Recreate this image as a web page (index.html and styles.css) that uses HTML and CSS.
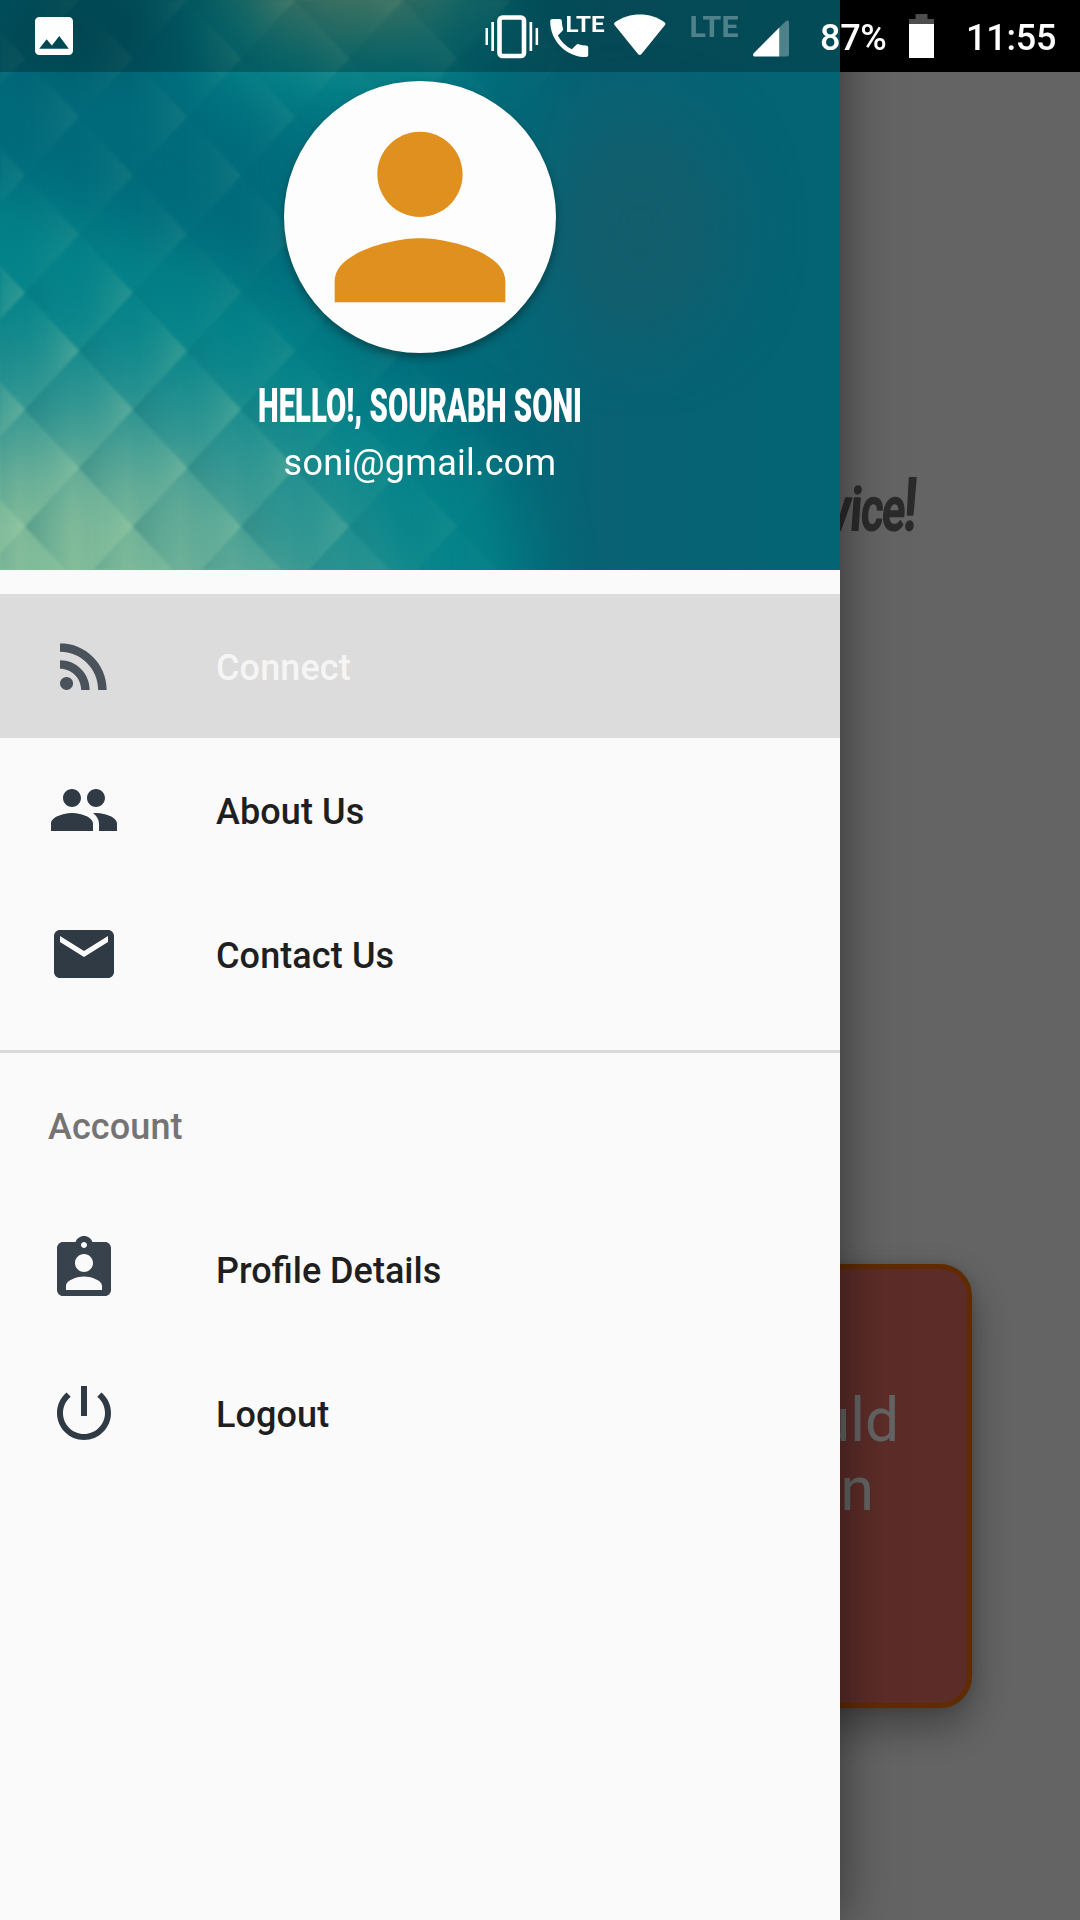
FILE: index.html
```html
<!DOCTYPE html>
<html lang="en">
<head>
<meta charset="utf-8">
<title>Navigation drawer</title>
<link rel="stylesheet" href="styles.css">
</head>
<body>
<div class="screen">
  <main class="page">
    <svg class="slogan" width="90" height="80" viewBox="830 470 90 80">
      <g transform="translate(0 530) skewX(-4)" class="slogan-text">
        <text x="826" y="0" textLength="24" lengthAdjust="spacingAndGlyphs">v</text>
        <text x="849" y="0" textLength="12" lengthAdjust="spacingAndGlyphs">i</text>
        <text x="860" y="0" textLength="22" lengthAdjust="spacingAndGlyphs">c</text>
        <text x="881" y="0" textLength="23" lengthAdjust="spacingAndGlyphs">e</text>
        <text x="902" y="0" class="bang" textLength="14" lengthAdjust="spacingAndGlyphs">!</text>
      </g>
    </svg>
    <section class="card">
      <p class="card-line">uld</p>
      <p class="card-line card-line-short">n</p>
    </section>
  </main>
  <div class="scrim"></div>

  <aside class="drawer">
    <header class="header">
      <svg class="cover" width="840" height="570" viewBox="0 0 840 570">
        <defs>
          <linearGradient id="base" x1="0" y1="0" x2="1" y2="0">
            <stop offset="0" stop-color="#006a7b"/>
            <stop offset=".5" stop-color="#006d7c"/>
            <stop offset=".72" stop-color="#086273"/>
            <stop offset="1" stop-color="#036474"/>
          </linearGradient>
          <linearGradient id="scale" x1="0" y1="0" x2="1" y2="0">
            <stop offset="0" stop-color="#00606c" stop-opacity=".34"/>
            <stop offset=".45" stop-color="#0a8090" stop-opacity=".05"/>
            <stop offset="1" stop-color="#b4dcae" stop-opacity=".32"/>
          </linearGradient>
          <pattern id="scales" width="108" height="117" patternUnits="userSpaceOnUse" patternTransform="translate(-29 0)">
            <path fill="url(#scale)" d="M0 0 54 58.5 0 117-54 58.5z"/>
            <path fill="url(#scale)" d="M108 0 162 58.5 108 117 54 58.5z"/>
            <path fill="url(#scale)" d="M54-58.5 108 0 54 58.5 0 0z"/>
            <path fill="url(#scale)" d="M54 58.5 108 117 54 175.5 0 117z"/>
          </pattern>
          <filter id="soft" x="-60%" y="-60%" width="220%" height="220%" color-interpolation-filters="sRGB"><feGaussianBlur stdDeviation="34"/></filter>
          <filter id="edge" color-interpolation-filters="sRGB"><feGaussianBlur stdDeviation="1.4"/></filter>
          <mask id="fade">
            <rect width="840" height="570" fill="#000"/>
            <g filter="url(#soft)">
              <path fill="#4c4c4c" d="M-90-90H540V60L420 240 540 660H-90z"/>
              <path fill="#fff" d="M-90 250 130 290 300 420 430 660H-90z"/>
              <path fill="#aaa" d="M200-90H490V30L390 60 200 40z"/>
            </g>
          </mask>
        </defs>
        <rect width="840" height="570" fill="url(#base)"/>
        <g filter="url(#soft)">
          <path fill="#04848a" d="M-90 170 40 200 170 250 290 300 380 390 500 480 540 680H-90z"/>
          <path fill="#2b9491" d="M-90 330 90 350 230 390 340 470 450 680H-90z"/>
          <path fill="#68ae98" d="M-90 430 90 430 210 470 350 680H-90z"/>
          <path fill="#8ac09a" d="M-90 500 110 490 250 690H-90z"/>
          <path fill="#04848a" d="M190-60H520L460 80 330 120 200 80z"/>
          <path fill="#659c80" d="M220-90H500L420 26H270z"/>
          <ellipse cx="80" cy="30" rx="80" ry="36" fill="#005867"/>
          <ellipse cx="640" cy="230" rx="90" ry="110" fill="#155d6b" opacity=".8"/>
        </g>
        <g mask="url(#fade)"><rect width="840" height="570" fill="url(#scales)" filter="url(#edge)"/></g>
      </svg>
      <div class="avatar">
        <svg width="256" height="256" viewBox="0 0 24 24"><path fill="#df901e" d="M12 12c2.21 0 4-1.79 4-4s-1.79-4-4-4-4 1.79-4 4 1.79 4 4 4zm0 2c-2.67 0-8 1.34-8 4v2h16v-2c0-2.66-5.330-4-8-4z"/></svg>
      </div>
      <svg class="name" width="326" height="48" viewBox="0 0 326 48"><text x="1" y="40.500" textLength="324" lengthAdjust="spacingAndGlyphs">HELLO!, SOURABH SONI</text></svg>
      <p class="email">soni@gmail.com</p>
    </header>

    <nav class="menu">
      <a class="item item-active">
        <svg class="icon" viewBox="0 0 24 24"><circle cx="6.18" cy="17.82" r="2.18"/><path d="M4 4.440v2.830c7.030 0 12.730 5.700 12.730 12.730h2.830c0-8.590-6.970-15.560-15.560-15.560zm0 5.660v2.830c3.900 0 7.070 3.170 7.070 7.070h2.830c0-5.470-4.430-9.900-9.900-9.900z"/></svg>
        <span>Connect</span>
      </a>
      <a class="item">
        <svg class="icon" viewBox="0 0 24 24"><path d="M16 11c1.660 0 2.990-1.340 2.990-3S17.660 5 16 5s-3 1.340-3 3 1.340 3 3 3zm-8 0c1.660 0 2.990-1.340 2.990-3S9.660 5 8 5 5 6.340 5 8s1.340 3 3 3zm0 2c-2.330 0-7 1.170-7 3.500V19h14v-2.500c0-2.330-4.670-3.500-7-3.500zm8 0c-.290 0-.620.020-.970.050 1.160.840 1.970 1.970 1.970 3.450V19h6v-2.500c0-2.330-4.670-3.500-7-3.500z"/></svg>
        <span>About Us</span>
      </a>
      <a class="item">
        <svg class="icon" viewBox="0 0 24 24"><path d="M20 4H4c-1.100 0-2 .900-2 2v12c0 1.100.900 2 2 2h16c1.100 0 2-.900 2-2V6c0-1.100-.900-2-2-2zm0 4-8 5-8-5V6l8 5 8-5v2z"/></svg>
        <span>Contact Us</span>
      </a>
    </nav>
    <nav class="menu menu-account">
      <h2 class="subheader"><span>Account</span></h2>
      <a class="item item-soft">
        <svg class="icon" viewBox="0 0 24 24"><path d="M19 3h-4.180C14.400 1.840 13.300 1 12 1s-2.400.840-2.820 2H5c-1.100 0-2 .900-2 2v14c0 1.100.900 2 2 2h14c1.100 0 2-.900 2-2V5c0-1.100-.900-2-2-2zm-7 0c.550 0 1 .450 1 1s-.450 1-1 1-1-.450-1-1 .450-1 1-1zm0 4c1.660 0 3 1.340 3 3s-1.340 3-3 3-3-1.340-3-3 1.340-3 3-3zm6 12H6v-1.400c0-2 4-3.100 6-3.100s6 1.100 6 3.100V19z"/></svg>
        <span>Profile Details</span>
      </a>
      <a class="item">
        <svg class="icon" viewBox="0 0 24 24"><path d="M13 3h-2v10h2V3zm4.830 2.170-1.420 1.420C17.990 7.860 19 9.810 19 12c0 3.870-3.130 7-7 7s-7-3.130-7-7c0-2.190 1.010-4.140 2.580-5.420L6.170 5.170C4.230 6.820 3 9.260 3 12c0 4.970 4.030 9 9 9s9-4.030 9-9c0-2.740-1.230-5.180-3.170-6.830z"/></svg>
        <span>Logout</span>
      </a>
    </nav>
  </aside>

  <div class="statusbar">
    <svg class="st-image" width="38" height="38" viewBox="3 3 18 18"><path d="M21 19V5c0-1.100-.900-2-2-2H5c-1.100 0-2 .900-2 2v14c0 1.100.900 2 2 2h14c1.100 0 2-.900 2-2zM8.500 13.500l2.500 3.010L14.500 12l4.500 6H5l3.500-4.500z"/></svg>
    <svg class="st-vibrate" width="54" height="44" viewBox="485 15 54 44">
      <rect x="499.500" y="17.500" width="24.500" height="38.500" rx="3" fill="none" stroke="#fff" stroke-width="4.600"/>
      <path d="M485.500 28h2.500v17h-2.500zM491.300 22h2.700v29h-2.700zM529.500 22h2.700v29h-2.700zM535.600 28h2.500v17h-2.500z"/>
    </svg>
    <svg class="st-call" width="56" height="44" viewBox="549 15 56 44">
      <path transform="translate(543.900 12.700) scale(2.110)" d="M6.620 10.790c1.440 2.830 3.760 5.140 6.590 6.590l2.200-2.200c.270-.270.670-.360 1.020-.240 1.120.370 2.330.570 3.570.570.550 0 1 .450 1 1V20c0 .550-.450 1-1 1-9.390 0-17-7.610-17-17 0-.550.450-1 1-1h3.500c.550 0 1 .450 1 1 0 1.250.200 2.450.570 3.570.110.350.030.740-.250 1.020l-2.200 2.200z"/>
      <text x="565.500" y="32" font-size="22.500" textLength="39" lengthAdjust="spacingAndGlyphs">LTE</text>
    </svg>
    <svg class="st-wifi" width="52" height="42" viewBox="614 14 52 42"><path d="M614.500 25Q613.500 23.500 615 22.300C629 11.800 651 11.800 664.500 22.300Q666 23.500 665 25L641.500 54Q639.700 56 638 54z"/></svg>
    <svg class="st-lte" width="50" height="24" viewBox="690 15 50 24"><text x="689.500" y="37" font-size="29.500" fill-opacity=".3" textLength="49" lengthAdjust="spacingAndGlyphs">LTE</text></svg>
    <svg class="st-signal" width="38" height="37" viewBox="752.500 20.500 38 37"><path fill-opacity=".3" d="M779.800 28 786.500 21.500Q789.500 20 789.500 23V54.500Q789.500 57 787 57H779.800z"/><path d="M754.500 57Q752.500 55.500 754 54L779.800 28V57z"/></svg>
    <span class="st-battery-text">87%</span>
    <svg class="st-battery" width="25" height="44" viewBox="909 14 25 44"><path fill="#4d4d4d" d="M915.500 14h12v5h6.500v5h-25v-5h6.500z"/><path d="M909 24h25v34h-25z"/></svg>
    <span class="st-clock">11:55</span>
  </div>
</div>
</body>
</html>
```
FILE: styles.css
```css
* { box-sizing: border-box; }
body { margin: 0; font-family: Roboto, "Noto Sans", sans-serif; }
p, h2 { margin: 0; }
svg { display: block; flex: none; }

.screen { position: relative; width: 1080px; height: 1920px; overflow: hidden; }

/* Page behind the drawer */
.page {
  display: flex;
  flex-direction: column;
  height: 1920px;
  background: #fafafa;
  border-top: 72px solid #000;
}
.slogan { margin: 398px 0 0 830px; overflow: visible; }
.slogan-text {
  font-size: 60px;
  font-weight: 500;
  fill: #6c6c6c;
  stroke: #6c6c6c;
  stroke-width: 2px;
  stroke-linejoin: round;
}
.bang { font-size: 73px; }
.card {
  width: 864px;
  height: 444px;
  margin: 714px 0 0 108px;
  padding: 117px 68px 0 0;
  background: #e66e64;
  border: 5px solid #f06c00;
  border-radius: 32px;
  box-shadow: 0 18px 40px rgba(0, 0, 0, .36), 0 0 12px rgba(0, 0, 0, .12);
  text-align: right;
}
.card-line { font-size: 60.5px; line-height: 69px; color: #fafafa; }
.card-line-short { padding-right: 25px; }

.scrim { position: absolute; inset: 72px 0 0; background: rgba(0, 0, 0, .6); }

/* Drawer */
.drawer {
  position: absolute;
  inset: 0 auto 0 0;
  width: 840px;
  background: #fafafa;
  box-shadow: 0 0 48px rgba(0, 0, 0, .5);
}
.header {
  position: relative;
  display: flex;
  flex-direction: column;
  align-items: center;
  height: 570px;
  padding-top: 81px;
  overflow: hidden;
}
.cover { position: absolute; inset: 0; }
.avatar {
  position: relative;
  display: flex;
  align-items: center;
  justify-content: center;
  width: 272px;
  height: 272px;
  margin-bottom: 1px;
  border-radius: 50%;
  background: #fdfdfd;
  box-shadow: 0 5px 8px rgba(0, 0, 0, .35);
}
.name { position: relative; margin-top: 27px; }
.name text { font-size: 47.5px; font-weight: 900; fill: #fff; }
.email { position: relative; margin-top: 12px; font-size: 36px; line-height: 44px; letter-spacing: .25px; color: #fff; }

.menu { padding: 24px 0; }
.menu-account { border-top: 3px solid #dadada; padding-top: 0; }
.item, .subheader {
  display: flex;
  align-items: center;
  height: 144px;
  padding: 0 48px;
  font-size: 36px;
  font-weight: 500;
  line-height: 44px;
  letter-spacing: .1px;
  color: #1f1f1f;
}
/* Labels sit slightly below the icon's centre line */
.item span, .subheader span { padding-top: 4px; font-variant-ligatures: common-ligatures; }
.item { gap: 96px; }
.icon { width: 72px; height: 72px; fill: #2f3a45; }
.item-soft .icon { fill: #38424c; }
.item-soft { letter-spacing: 0; }
.item-active { background: #dcdcdc; color: #f5f5f5; }
.item-active .icon { fill: #4a535c; }
.subheader { color: #747474; }

/* Status bar */
.statusbar {
  position: absolute;
  inset: 0 0 auto;
  display: flex;
  align-items: flex-start;
  height: 72px;
  background: rgba(0, 0, 0, .25);
  color: #fff;
  font-size: 36px;
  font-weight: 500;
  line-height: 42px;
}
.statusbar svg { fill: #fff; }
.statusbar text { font-weight: 700; }
.st-image { margin: 17px 0 0 35px; }
.st-vibrate { margin: 15px 0 0 412px; }
.st-call { margin: 15px 0 0 10px; }
.st-wifi { margin: 14px 0 0 9px; }
.st-lte { margin: 15px 0 0 24px; }
.st-signal { margin: 20px 0 0 12px; }
.st-battery-text { width: 66px; margin: 17px 0 0 30px; letter-spacing: -.3px; }
.st-battery { margin: 14px 0 0 23px; }
.st-clock { margin: 17px 0 0 32px; letter-spacing: -.2px; }
```
